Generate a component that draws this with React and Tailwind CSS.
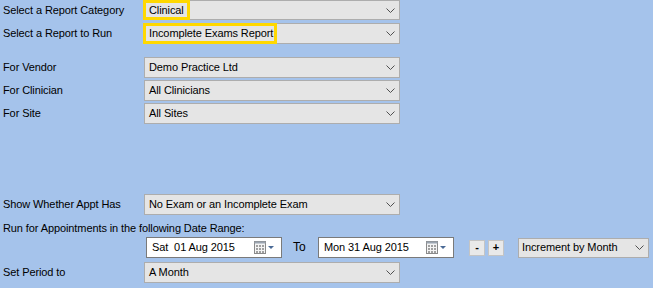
import React from "react";

const Chevron = () => (
  <svg width="9" height="5" viewBox="0 0 9 5" className="shrink-0">
    <polyline points="0.5,0.5 4.5,4.5 8.5,0.5" fill="none" stroke="#505050" strokeWidth="1" />
  </svg>
);

const CalendarIcon = () => (
  <svg width="22" height="14" viewBox="0 0 22 14" className="shrink-0">
    <rect x="0.5" y="0.5" width="11" height="12" fill="#f4f4f4" stroke="#8a8a8a" />
    <rect x="0.5" y="0.5" width="11" height="2" fill="#9aa4b0" />
    {[3, 6, 9].map((y) =>
      [2, 5, 8].map((x) => <rect key={`${x}-${y}`} x={x} y={y + 1} width="2" height="2" fill="#a0a0a0" />)
    )}
    <polygon points="14,5 20,5 17,8" fill="#4a6a96" />
  </svg>
);

const Combo = ({ value, highlight, width = "w-[256px]" }) => (
  <div className={`relative flex h-full ${width} items-center justify-between border border-[#adadad] bg-[#e5e5e5] pl-[4px] pr-[4px]`}>
    <span className="whitespace-nowrap">{value}</span>
    <Chevron />
    {highlight && (
      <div className={`absolute left-[-2px] top-[-1px] bottom-[-1px] ${highlight} border-[3px] border-[#ffd800]`} />
    )}
  </div>
);

const Row = ({ label, className, children }) => (
  <div className={`flex items-center ${className}`}>
    <div className="w-[144px] pl-[3px] whitespace-nowrap">{label}</div>
    {children}
  </div>
);

const DatePicker = ({ value }) => (
  <div className="flex h-full w-[136px] items-center justify-between border border-[#7a7a7a] bg-white pl-[5px] pr-[5px]">
    <span className="whitespace-pre">{value}</span>
    <CalendarIcon />
  </div>
);

const SmallButton = ({ children }) => (
  <div className="flex h-[16px] w-[16px] items-center justify-center border border-[#c4c4c4] bg-[#e9e9e9] text-[11px] font-bold leading-none">
    {children}
  </div>
);

export default function App() {
  return (
    <div
      className="flex h-[288px] w-[653px] flex-col overflow-hidden bg-[#a5c3eb] text-[11px] leading-[15px] tracking-[-0.1px] text-black"
      style={{ fontFamily: '"Liberation Sans", Arial, sans-serif' }}
    >
      <Row label="Select a Report Category" className="h-[20px]">
        <Combo value="Clinical" highlight="w-[47px]" />
      </Row>
      <Row label="Select a Report to Run" className="mt-[3px] h-[21px]">
        <Combo value="Incomplete Exams Report" highlight="w-[134px]" />
      </Row>
      <Row label="For Vendor" className="mt-[13px] h-[21px]">
        <Combo value="Demo Practice Ltd" />
      </Row>
      <Row label="For Clinician" className="mt-[2px] h-[21px]">
        <Combo value="All Clinicians" />
      </Row>
      <Row label="For Site" className="mt-[2px] h-[21px]">
        <Combo value="All Sites" />
      </Row>
      <Row label="Show Whether Appt Has" className="mt-[70px] h-[21px]">
        <Combo value="No Exam or an Incomplete Exam" />
      </Row>
      <div className="mt-[5px] h-[17px] pl-[3px] leading-[17px] whitespace-nowrap">
        Run for Appointments in the following Date Range:
      </div>
      <div className="flex h-[21px] items-center pl-[146px]">
        <DatePicker value="Sat  01 Aug 2015" />
        <span className="ml-[11px] w-[25px] text-[12px]">To</span>
        <DatePicker value="Mon 31 Aug 2015" />
        <div className="ml-[15px] flex gap-[3px]">
          <SmallButton>-</SmallButton>
          <SmallButton>+</SmallButton>
        </div>
        <div className="ml-[14px] flex h-[20px] w-[131px] items-center justify-between border border-[#adadad] bg-[#e5e5e5] pl-[3px] pr-[4px]">
          <span className="whitespace-nowrap">Increment by Month</span>
          <Chevron />
        </div>
      </div>
      <Row label="Set Period to" className="mt-[4px] h-[21px]">
        <Combo value="A Month" />
      </Row>
    </div>
  );
}
